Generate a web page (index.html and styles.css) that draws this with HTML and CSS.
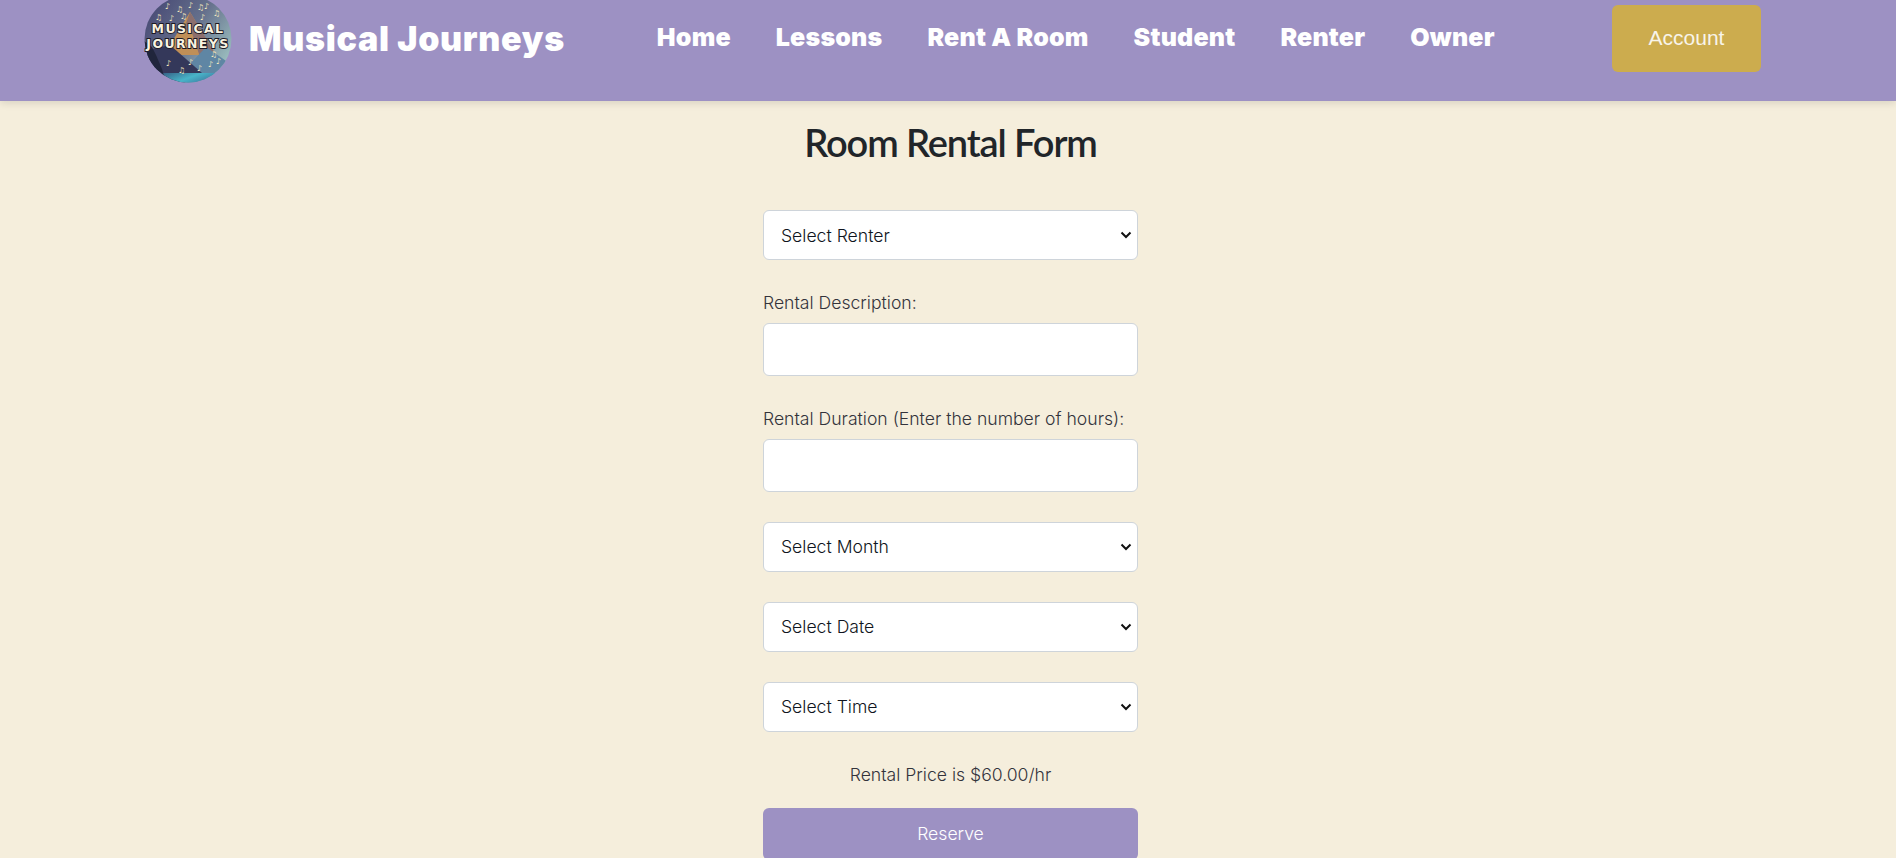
FILE: index.html
```html
<!DOCTYPE html>
<html lang="en">
<head>
<meta charset="utf-8">
<title>Room Rental Form</title>
<link rel="stylesheet" href="styles.css">
</head>
<body>
<header class="topbar">
  <a class="brand" href="#">
    <svg class="logo" viewBox="0 0 88 88" aria-hidden="true">
      <defs>
        <clipPath id="disc"><circle cx="44" cy="44" r="43.5"/></clipPath>
        <linearGradient id="sky" x1="0" y1="0" x2="1" y2="0.7">
          <stop offset="0" stop-color="#41416f"/>
          <stop offset="0.55" stop-color="#65708c"/>
          <stop offset="1" stop-color="#9cc0c0"/>
        </linearGradient>
        <linearGradient id="lake" x1="0" y1="0" x2="1" y2="0.3">
          <stop offset="0" stop-color="#2d3a66"/>
          <stop offset="0.6" stop-color="#48b4c8"/>
          <stop offset="1" stop-color="#3a6a96"/>
        </linearGradient>
      </defs>
      <g clip-path="url(#disc)">
        <rect width="88" height="88" fill="url(#sky)"/>
        <polygon points="20,60 46,17 72,60" fill="#c08f57"/>
        <polygon points="46,17 40,34 48,38 56,62 72,60" fill="#8c6f6e"/>
        <polygon points="28,88 62,52 88,70 88,88" fill="#5f86a4"/>
        <polygon points="0,56 26,50 58,78 40,88 0,88" fill="#34385a"/>
        <rect y="78" width="88" height="10" fill="url(#lake)"/>
        <polygon points="0,46 8,52 12,60 18,74 22,88 0,88" fill="#20253c"/>
      </g>
      <g class="notes">
        <text x="21" y="14">♪</text><text x="32" y="17">♫</text><text x="44" y="13">♪</text><text x="53" y="15">♫</text><text x="60" y="14">♪</text>
        <text x="11" y="25">♫</text><text x="25" y="26">♪</text><text x="36" y="24">♫</text><text x="56" y="25">♪</text><text x="69" y="21">♫</text>
        <text x="22" y="71">♪</text><text x="34" y="78">♫</text><text x="44" y="70">♪</text><text x="53" y="76">♪</text><text x="64" y="72">♪</text><text x="72" y="69">♪</text><text x="66" y="62">♫</text>
      </g>
      <text class="logo-word" x="44" y="38">MUSICAL</text>
      <text class="logo-word" x="44" y="53">JOURNEYS</text>
    </svg>
    <span class="brand-name">Musical Journeys</span>
  </a>
  <nav class="mainnav">
    <a href="#">Home</a>
    <a href="#">Lessons</a>
    <a href="#">Rent A Room</a>
    <a href="#">Student</a>
    <a href="#">Renter</a>
    <a href="#">Owner</a>
  </nav>
  <button class="account" type="button">Account</button>
</header>
<main class="page">
  <h1 class="title">Room Rental Form</h1>
  <form class="rental">
    <select class="control pick"><option>Select Renter</option></select>
    <label class="field">Rental Description:<input class="control text" type="text"></label>
    <label class="field">Rental Duration (Enter the number of hours):<input class="control text" type="text"></label>
    <select class="control pick"><option>Select Month</option></select>
    <select class="control pick"><option>Select Date</option></select>
    <select class="control pick"><option>Select Time</option></select>
    <p class="price">Rental Price is $60.00/hr</p>
    <button class="reserve" type="button">Reserve</button>
  </form>
</main>
</body>
</html>
```

FILE: styles.css
```css
* { box-sizing: border-box; }
html, body { height: 100%; }
body {
  margin: 0;
  overflow: hidden;
  background: #f5eedc;
  color: #212529;
  font-family: Inter, "Liberation Sans", sans-serif;
  font-size: 16px;
  line-height: 1.5;
}
.topbar {
  display: flex;
  height: 101px;
  padding: 0 135px 0 144px;
  background: #9d91c3;
  box-shadow: 0 2px 8px rgba(0, 0, 0, 0.12);
}
.brand {
  display: flex;
  align-items: center;
  gap: 17px;
  height: 77px;
  color: #fff;
  text-decoration: none;
}
.logo { flex: none; width: 88px; height: 88px; }
.notes text { fill: #f6ebc0; font-family: "DejaVu Sans", sans-serif; font-size: 8px; }
.logo-word {
  fill: #f9f3e0;
  stroke: #1d1924;
  stroke-width: 1.8px;
  paint-order: stroke;
  font-family: "DejaVu Sans", sans-serif;
  font-size: 12.5px;
  font-weight: 700;
  letter-spacing: 1.4px;
  text-anchor: middle;
}
.brand-name {
  font-family: Inter, sans-serif;
  font-size: 34px;
  font-weight: 900;
  letter-spacing: 0.7px;
  white-space: nowrap;
}
.mainnav {
  display: flex;
  gap: 45px;
  margin-left: 92px;
  padding-top: 21px;
}
.mainnav a {
  color: #fff;
  font-family: Inter, sans-serif;
  font-size: 25px;
  font-weight: 900;
  letter-spacing: 0.2px;
  line-height: 33px;
  text-decoration: none;
  white-space: nowrap;
}
.account {
  width: 149px;
  height: 67px;
  margin: 5px 0 0 auto;
  padding: 0 0 2px;
  border: 0;
  border-radius: 6px;
  background: #ccac4e;
  color: #f8f4ea;
  font: 400 21px "Liberation Sans", sans-serif;
}
.page { display: flex; flex-direction: column; align-items: center; padding-left: 5px; }
.title {
  margin: 17px 0 44px;
  font-family: Lato, sans-serif;
  font-size: 38px;
  font-weight: 600;
  letter-spacing: -1.1px;
  line-height: 48px;
}
.rental { display: flex; flex-direction: column; width: 375px; }
.control {
  display: block;
  width: 100%;
  border: 1px solid #ced4da;
  border-radius: 6px;
  background-color: #fff;
  color: #0f1520;
  font: 300 17.6px Inter, sans-serif;
}
.pick {
  height: 50px;
  margin-bottom: 30px;
  padding: 0 17px;
  appearance: none;
  background-image: url("data:image/svg+xml,%3Csvg xmlns='http://www.w3.org/2000/svg' width='12' height='8' viewBox='0 0 12 8'%3E%3Cpath d='M1.5 1.5 6 6l4.5-4.5' fill='none' stroke='%23111' stroke-width='2'/%3E%3C/svg%3E");
  background-repeat: no-repeat;
  background-position: right 5px center;
}
.text { height: 53px; margin-top: 7px; }
.field { display: block; margin-bottom: 29.4px; color: #33333b; font-size: 17.6px; font-weight: 300; }
.price { margin: 0 0 20px; text-align: center; color: #33333b; font-size: 17.6px; font-weight: 300; }
.reserve {
  height: 52px;
  border: 0;
  border-radius: 6px;
  background: #9d91c3;
  color: #fff;
  font: 300 17.6px Inter, sans-serif;
}
```
